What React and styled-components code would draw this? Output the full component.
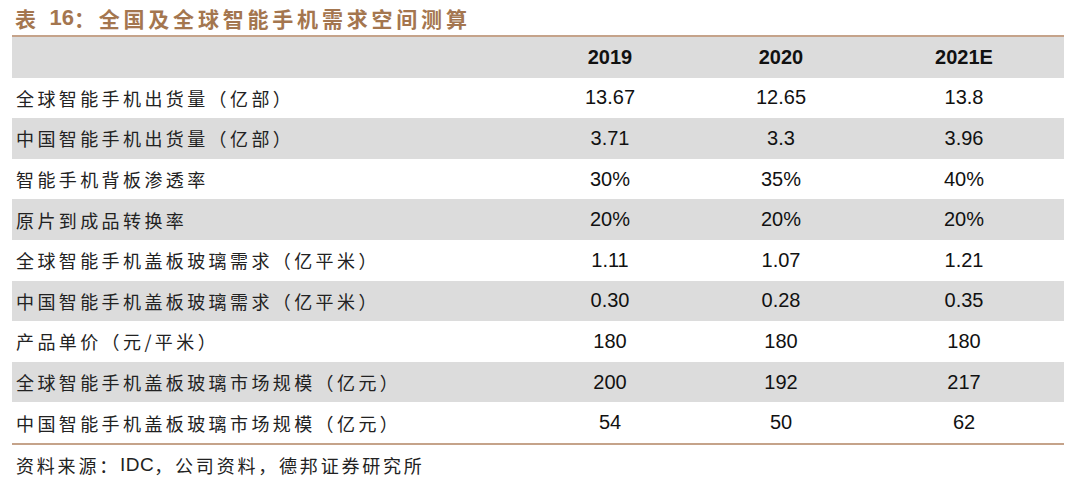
import React from "react";
import styled, { createGlobalStyle } from "styled-components";

const GlobalStyle = createGlobalStyle`
  html, body { margin: 0; padding: 0; background: #ffffff; }
  body { width: 1080px; height: 485px; overflow: hidden; }
`;

const CJK = `"Liberation Sans", "Noto Sans CJK SC", sans-serif`;

const Page = styled.div`
  width: 1052px;
  padding-left: 12px;
  display: flex;
  flex-direction: column;
`;

const Title = styled.h1`
  margin: 0;
  height: 35px;
  display: flex;
  align-items: center;
  padding-left: 3px;
  font-family: ${CJK};
  font-weight: 700;
  font-size: 21px;
  letter-spacing: 3.8px;
  color: #a4764f;
  white-space: pre;
`;

const Latin = styled.span`
  font-family: "Liberation Sans", Arial, sans-serif;
  font-size: ${(p) => p.$size || 20}px;
  letter-spacing: ${(p) => p.$spacing || 0}px;
`;

const Table = styled.div`
  border-top: 2px solid #c5a38a;
  border-bottom: 2px solid #c5a38a;
  display: flex;
  flex-direction: column;
`;

const Row = styled.div`
  display: grid;
  grid-template-columns: 510px 176px 166px 200px;
  align-items: center;
  height: 40.6px;
  background: ${(p) => (p.$shaded ? "#dcdcdc" : "#ffffff")};
`;

const Label = styled.div`
  padding-left: 4px;
  font-family: "Noto Sans CJK SC", sans-serif;
  font-size: 18px;
  font-weight: 400;
  letter-spacing: 3.4px;
  color: #222222;
  white-space: nowrap;
`;

const Num = styled.div`
  text-align: center;
  font-family: "Liberation Sans", Arial, sans-serif;
  font-size: 20px;
  font-weight: ${(p) => (p.$bold ? 700 : 400)};
  color: #111111;
`;

const Source = styled.div`
  height: 40px;
  display: flex;
  align-items: center;
  padding-left: 4px;
  font-family: ${CJK};
  font-size: 18px;
  letter-spacing: 2.8px;
  color: #222222;
  white-space: pre;
`;

const rows = [
  ["全球智能手机出货量（亿部）", "13.67", "12.65", "13.8"],
  ["中国智能手机出货量（亿部）", "3.71", "3.3", "3.96"],
  ["智能手机背板渗透率", "30%", "35%", "40%"],
  ["原片到成品转换率", "20%", "20%", "20%"],
  ["全球智能手机盖板玻璃需求（亿平米）", "1.11", "1.07", "1.21"],
  ["中国智能手机盖板玻璃需求（亿平米）", "0.30", "0.28", "0.35"],
  ["产品单价（元/平米）", "180", "180", "180"],
  ["全球智能手机盖板玻璃市场规模（亿元）", "200", "192", "217"],
  ["中国智能手机盖板玻璃市场规模（亿元）", "54", "50", "62"],
];

export default function App() {
  return (
    <>
      <GlobalStyle />
      <Page>
        <Title>
          表 <Latin $size={22}>16</Latin>：全国及全球智能手机需求空间测算
        </Title>
        <Table>
          <Row $shaded>
            <Label />
            <Num $bold>2019</Num>
            <Num $bold>2020</Num>
            <Num $bold>2021E</Num>
          </Row>
          {rows.map((r, i) => (
            <Row key={r[0]} $shaded={i % 2 === 1}>
              <Label>{r[0]}</Label>
              <Num>{r[1]}</Num>
              <Num>{r[2]}</Num>
              <Num>{r[3]}</Num>
            </Row>
          ))}
        </Table>
        <Source>
          资料来源：<Latin $size={19} $spacing={0.5}>IDC</Latin>，公司资料，德邦证券研究所
        </Source>
      </Page>
    </>
  );
}
